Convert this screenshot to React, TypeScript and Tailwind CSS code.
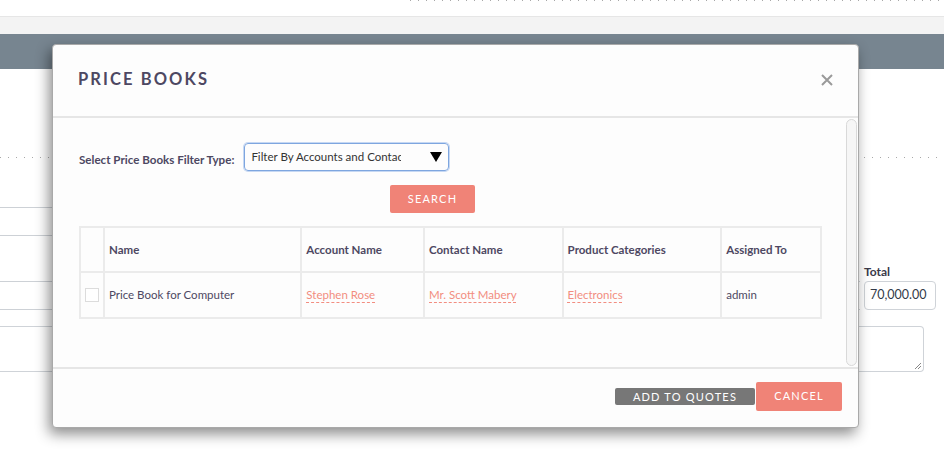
import { ReactNode } from 'react';

const dots =
  'bg-[linear-gradient(to_right,#a8a8a8_1px,transparent_1px)] bg-[length:8px_1px] bg-repeat-x';

type Col = { label: string; width: string };

const cols: Col[] = [
  { label: '', width: 'w-[24px]' },
  { label: 'Name', width: 'w-[198px]' },
  { label: 'Account Name', width: 'w-[123px]' },
  { label: 'Contact Name', width: 'w-[139px]' },
  { label: 'Product Categories', width: 'w-[159px]' },
  { label: 'Assigned To', width: 'w-[100px]' },
];

function LinkText({ children }: { children: ReactNode }) {
  return (
    <span className="text-[#f28d80] underline decoration-dashed decoration-1 underline-offset-[3px]">
      {children}
    </span>
  );
}

function Background() {
  return (
    <div className="relative h-[458px] w-[944px] overflow-hidden bg-white">
      <div className="h-[16px] pl-[410px]">
        <div className={`h-px ${dots}`} />
      </div>
      <div className="h-[18px] border-t border-[#e6e6e6] bg-[#f3f3f3]" />
      <div className="h-[35px] bg-[#778590]" />

      <div className="mt-[88px] h-px">
        <div className={`h-px w-full ${dots}`} />
      </div>

      <div className="mt-[49px] h-[29px] w-[840px] border-y border-[#cdd1d6]" />

      <div className="mt-[29px] flex items-end">
        <div className="h-[29px] w-[860px] border-y border-[#cdd1d6]" />
        <div className="ml-[4px] flex flex-col">
          <span className="text-[12px] font-bold leading-[14px] text-[#3a3a4a]">Total</span>
          <div className="mt-[2px] flex h-[29px] w-[72px] items-center rounded-[4px] border border-[#cfd3d8] pl-[5px] text-[12.5px] text-[#333a48]">
            70,000.00
          </div>
        </div>
      </div>

      <div className="relative mt-[16px] h-[46px] w-[924px] rounded-r-[4px] border border-l-0 border-[#cfd3d8]">
        <svg className="absolute bottom-[1px] right-[1px]" width="8" height="8" viewBox="0 0 8 8">
          <path d="M7 1 L1 7 M7 4 L4 7" stroke="#888" strokeWidth="1" />
        </svg>
      </div>
    </div>
  );
}

function Modal() {
  return (
    <div className="absolute left-[52px] top-[44px] flex h-[384px] w-[807px] flex-col rounded-[4px] border border-[#a9a9a9] bg-[#fdfdfd] shadow-[-3px_6px_14px_rgba(0,0,0,0.45)]">
      <div className="flex h-[73px] items-center justify-between border-b-2 border-[#e6e6e6] pl-[25px] pr-[25px]">
        <h2 className="mt-[-2px] text-[16.5px] font-bold tracking-[2.1px] text-[#4d4862]">PRICE BOOKS</h2>
        <svg width="12" height="12" viewBox="0 0 12 12" className="mt-[-1px]">
          <path d="M1 1 L11 11 M11 1 L1 11" stroke="#9a9a9a" strokeWidth="2" />
        </svg>
      </div>

      <div className="flex min-h-0 flex-1">
        <div className="flex-1 pl-[26px] pt-[25px]">
          <div className="flex items-center">
            <label className="mt-[5px] text-[11.6px] font-bold text-[#4d4862]">
              Select Price Books Filter Type:
            </label>
            <div className="ml-[10px] flex h-[28px] w-[205px] items-center justify-between rounded-[4px] border border-[#7ea6df] pl-[6px] pr-[6px] shadow-[0_0_0_1px_rgba(130,170,230,0.45)]">
              <span className="w-[150px] overflow-hidden whitespace-nowrap text-[11.5px] text-[#333]">
                Filter By Accounts and Contacts
              </span>
              <svg width="12" height="10" viewBox="0 0 12 10">
                <path d="M0 0 H12 L6 10 Z" fill="#000" />
              </svg>
            </div>
          </div>

          <button className="ml-[311px] mt-[14px] h-[28px] w-[85px] rounded-[2px] bg-[#f08377] text-[11px] tracking-[1.2px] text-white">
            SEARCH
          </button>

          <table className="mt-[13px] w-[743px] border-collapse text-left text-[11.5px] text-[#4d4862]">
            <thead>
              <tr className="h-[45px]">
                {cols.map((c, i) => (
                  <th key={i} className={`${c.width} border-2 border-[#ebebeb] pl-[4px] font-bold`}>
                    {c.label}
                  </th>
                ))}
              </tr>
            </thead>
            <tbody>
              <tr className="h-[46px]">
                <td className="border-2 border-[#ebebeb] pl-[4px]">
                  <div className="h-[14px] w-[14px] border border-[#dcdcdc] bg-white" />
                </td>
                <td className="border-2 border-[#ebebeb] pl-[4px]">Price Book for Computer</td>
                <td className="border-2 border-[#ebebeb] pl-[4px]">
                  <LinkText>Stephen Rose</LinkText>
                </td>
                <td className="border-2 border-[#ebebeb] pl-[4px]">
                  <LinkText>Mr. Scott Mabery</LinkText>
                </td>
                <td className="border-2 border-[#ebebeb] pl-[4px]">
                  <LinkText>Electronics</LinkText>
                </td>
                <td className="border-2 border-[#ebebeb] pl-[4px]">admin</td>
              </tr>
            </tbody>
          </table>
        </div>

        <div className="mr-[1px] w-[11px] py-[1px]">
          <div className="h-full rounded-full border border-[#d9d9d9] bg-[#f6f6f6]" />
        </div>
      </div>

      <div className="flex h-[60px] items-center justify-end border-t-2 border-[#e6e6e6] pb-[3px] pr-[16px]">
        <button className="h-[17px] w-[140px] rounded-[2px] bg-[#777777] text-[11px] leading-[17px] tracking-[1.2px] text-white">
          ADD TO QUOTES
        </button>
        <button className="ml-[1px] h-[29px] w-[86px] rounded-[2px] bg-[#f08377] text-[11px] tracking-[1.2px] text-white">
          CANCEL
        </button>
      </div>
    </div>
  );
}

export default function App() {
  return (
    <div className="relative font-['Lato','Open_Sans',sans-serif]">
      <Background />
      <Modal />
    </div>
  );
}
